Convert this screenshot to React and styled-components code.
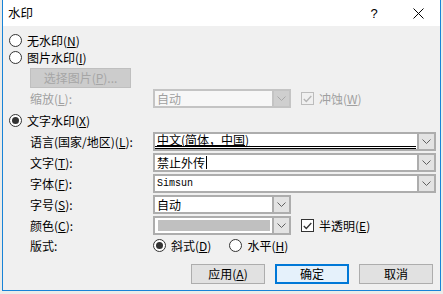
import React from "react";
import styled, { createGlobalStyle, css } from "styled-components";

const Global = createGlobalStyle`
  html, body { margin: 0; padding: 0; }
  body {
    width: 443px;
    height: 294px;
    overflow: hidden;
    background: #ecebe8;
    font-family: "Noto Sans CJK SC", "Noto Sans", sans-serif;
    font-size: 12px;
    color: #000;
  }
`;

const Window = styled.div`
  box-sizing: border-box;
  margin-left: 2px;
  width: 439px;
  height: 291px;
  border: 1px solid #1883d7;
  border-top: none;
  background: #f0f0f0;
  display: flex;
  flex-direction: column;
`;

const TitleBar = styled.div`
  height: 26px;
  background: #fff;
  display: flex;
  align-items: center;
  padding-left: 5px;
  font-size: 12.5px;
`;

const Title = styled.span`
  flex: 1;
  line-height: 1;
`;

const TitleButton = styled.span`
  width: 44px;
  height: 26px;
  display: flex;
  align-items: center;
  justify-content: center;
  font-family: "Liberation Sans", sans-serif;
  font-size: 13px;
`;

const Body = styled.div`
  flex: 1;
  padding: 6px 0 0 6px;
  display: flex;
  flex-direction: column;
`;

const OptionRow = styled.label`
  height: 17px;
  margin-top: ${(p) => p.$mt || "0"};
  display: flex;
  align-items: center;
  gap: 5px;
  line-height: 1;
  color: ${(p) => (p.$disabled ? "#a0a0a0" : "#000")};
`;

const Radio = styled.span`
  box-sizing: border-box;
  width: 13px;
  height: 13px;
  border-radius: 50%;
  border: 1px solid #333;
  background: #fff;
  display: flex;
  align-items: center;
  justify-content: center;
  flex: none;
  &::after {
    content: "";
    width: 7px;
    height: 7px;
    border-radius: 50%;
    background: ${(p) => (p.$checked ? "#333" : "transparent")};
  }
`;

const Check = styled.span`
  box-sizing: border-box;
  width: 13px;
  height: 13px;
  border: 1px solid ${(p) => (p.$disabled ? "#bcbcbc" : "#333")};
  background: ${(p) => (p.$disabled ? "#f0f0f0" : "#fff")};
  display: flex;
  align-items: center;
  justify-content: center;
  flex: none;
  svg { display: block; }
`;

const Indent = styled.div`
  padding-left: 21px;
`;

const PlainButton = styled.div`
  box-sizing: border-box;
  width: 101px;
  height: 20px;
  margin-top: 2px;
  background: #cccccc;
  border: 1px solid #bfbfbf;
  color: #a6a6a6;
  display: flex;
  align-items: center;
  justify-content: center;
  line-height: 1;
`;

const Field = styled.div`
  display: grid;
  grid-template-columns: 123px ${(p) => p.$w || "138px"} auto;
  align-items: center;
  height: 19px;
  margin-top: ${(p) => p.$mt || "2px"};
  line-height: 1;
`;

const Label = styled.span`
  color: ${(p) => (p.$disabled ? "#a0a0a0" : "#000")};
  white-space: nowrap;
`;

const Combo = styled.div`
  box-sizing: border-box;
  height: 19px;
  border: 2px solid ${(p) => (p.$disabled ? "#c4c4c4" : "#adadad")};
  background: ${(p) => (p.$disabled ? "#f7f7f7" : "#fff")};
  display: flex;
  align-items: stretch;
  color: ${(p) => (p.$disabled ? "#a0a0a0" : "#000")};
`;

const ComboText = styled.div`
  flex: 1;
  display: flex;
  align-items: center;
  padding-left: 2px;
  min-width: 0;
  white-space: nowrap;
  ${(p) =>
    p.$mono &&
    css`
      font-family: "Liberation Mono", monospace;
      font-size: 10px;
    `}
  ${(p) =>
    p.$focus &&
    css`
      align-items: flex-start;
      margin-right: 1px;
      border-bottom: 3px double #000;
      u { text-underline-offset: 0px; }
    `}
`;

const Caret = styled.span`
  display: inline-block;
  width: 1px;
  height: 13px;
  background: #000;
  margin-left: 1px;
`;

const Swatch = styled.div`
  flex: 1;
  margin: 2px 2px 2px 3px;
  background: #c0c0c0;
`;

const DropButton = styled.div`
  width: 15px;
  flex: none;
  border-left: 2px solid ${(p) => (p.$disabled ? "#c4c4c4" : "#adadad")};
  background: ${(p) => (p.$disabled ? "#cfcfcf" : "#e3e3e3")};
  display: flex;
  align-items: center;
  justify-content: center;
`;

const Side = styled.label`
  display: flex;
  align-items: center;
  gap: 5px;
  padding-left: 10px;
  color: ${(p) => (p.$disabled ? "#a0a0a0" : "#000")};
`;

const Layout = styled.div`
  display: flex;
  align-items: center;
  gap: 5px;
`;

const Spacer = styled.span`
  width: 8px;
`;

const Footer = styled.div`
  display: flex;
  justify-content: flex-end;
  gap: 10px;
  padding: 0 7px 0 0;
  margin-top: 9px;
`;

const DialogButton = styled.div`
  box-sizing: border-box;
  width: 74px;
  height: 20px;
  display: flex;
  align-items: center;
  justify-content: center;
  line-height: 1;
  background: ${(p) => (p.$primary ? "#e5f1fb" : "#e1e1e1")};
  border: 1px solid ${(p) => (p.$primary ? "#0078d7" : "#adadad")};
  box-shadow: ${(p) => (p.$primary ? "inset 0 0 0 1px #0078d7" : "none")};
`;

const Chevron = ({ color = "#606060" }) => (
  <svg width="9" height="5" viewBox="0 0 9 5">
    <path d="M0.5 0.5 L4.5 4.5 L8.5 0.5" fill="none" stroke={color} strokeWidth="1" />
  </svg>
);

const Tick = ({ color = "#333" }) => (
  <svg width="9" height="8" viewBox="0 0 9 8">
    <path d="M0.8 4 L3.3 6.5 L8.3 1" fill="none" stroke={color} strokeWidth="1.3" />
  </svg>
);

function Select({ children, disabled, mono, focus, swatch }) {
  return (
    <Combo $disabled={disabled}>
      {swatch ? <Swatch /> : <ComboText $mono={mono} $focus={focus}>{children}</ComboText>}
      <DropButton $disabled={disabled}>
        <Chevron color={disabled ? "#a8a8a8" : "#606060"} />
      </DropButton>
    </Combo>
  );
}

export default function App() {
  return (
    <>
      <Global />
      <Window>
        <TitleBar>
          <Title>水印</Title>
          <TitleButton>?</TitleButton>
          <TitleButton>
            <svg width="11" height="11" viewBox="0 0 11 11">
              <path d="M0.5 0.5 L10.5 10.5 M10.5 0.5 L0.5 10.5" stroke="#000" strokeWidth="1" />
            </svg>
          </TitleButton>
        </TitleBar>
        <Body>
          <OptionRow>
            <Radio />
            <span>无水印(<u>N</u>)</span>
          </OptionRow>
          <OptionRow>
            <Radio />
            <span>图片水印(<u>I</u>)</span>
          </OptionRow>
          <Indent>
            <PlainButton>选择图片(<u>P</u>)...</PlainButton>
            <Field $mt="1px">
              <Label $disabled>缩放(<u>L</u>):</Label>
              <Select disabled>自动</Select>
              <Side $disabled>
                <Check $disabled>
                  <Tick color="#b4b4b4" />
                </Check>
                <span>冲蚀(<u>W</u>)</span>
              </Side>
            </Field>
          </Indent>
          <OptionRow $mt="4px">
            <Radio $checked />
            <span>文字水印(<u>X</u>)</span>
          </OptionRow>
          <Indent>
            <Field $w="283px" $mt="3px">
              <Label>语言(国家/地区)(<u>L</u>):</Label>
              <Select focus>
                <u>中文(简体，中国)</u>
              </Select>
            </Field>
            <Field $w="283px">
              <Label>文字(<u>T</u>):</Label>
              <Select>
                禁止外传
                <Caret />
              </Select>
            </Field>
            <Field $w="283px">
              <Label>字体(<u>F</u>):</Label>
              <Select mono>Simsun</Select>
            </Field>
            <Field>
              <Label>字号(<u>S</u>):</Label>
              <Select>自动</Select>
            </Field>
            <Field>
              <Label>颜色(<u>C</u>):</Label>
              <Select swatch />
              <Side>
                <Check>
                  <Tick />
                </Check>
                <span>半透明(<u>E</u>)</span>
              </Side>
            </Field>
            <Field $w="auto" $mt="1px">
              <Label>版式:</Label>
              <Layout>
                <Radio $checked />
                <span>斜式(<u>D</u>)</span>
                <Spacer />
                <Radio />
                <span>水平(<u>H</u>)</span>
              </Layout>
            </Field>
          </Indent>
          <Footer>
            <DialogButton>应用(<u>A</u>)</DialogButton>
            <DialogButton $primary>确定</DialogButton>
            <DialogButton>取消</DialogButton>
          </Footer>
        </Body>
      </Window>
    </>
  );
}
